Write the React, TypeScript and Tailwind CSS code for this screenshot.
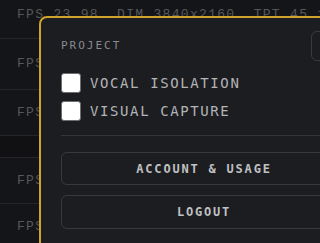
import React from "react";

const rows = [
  { h: "h-[39px]", text: true, pb: "pb-[9px]" },
  { h: "h-[51px]", text: true },
  { h: "h-[46px]", text: true },
  { h: "h-[22px]", text: false },
  { h: "h-[46px]", text: true },
  { h: "h-[46px]", text: true },
];

function Row({ h, text, pb }: { h: string; text: boolean; pb?: string }) {
  return (
    <div
      className={`${h} ${pb ?? ""} flex items-center border-b border-[#2a2b2e] pl-[17px] ${
        text ? "bg-[#17181b]" : "bg-[#131416]"
      }`}
    >
      {text && (
        <span className="whitespace-pre font-['Liberation_Mono',monospace] text-[13px] tracking-[1.3px] text-[#606164]">
          FPS 23.98  DIM 3840x2160  TPT 45.1
        </span>
      )}
    </div>
  );
}

function Check({ label }: { label: string }) {
  return (
    <label className="flex h-[20px] items-center gap-[9px]">
      <span className="h-[20px] w-[20px] shrink-0 rounded-[3px] border border-[#6e6e70] bg-white" />
      <span className="font-['DejaVu_Sans_Mono',monospace] text-[14px] tracking-[1.6px] text-[#b3b4b6]">
        {label}
      </span>
    </label>
  );
}

export default function App() {
  return (
    <div className="relative h-[243px] w-[320px] overflow-hidden bg-[#17181b]">
      <div className="flex flex-col">
        {rows.map((r, i) => (
          <Row key={i} {...r} />
        ))}
      </div>
      <div className="absolute inset-0 bg-black/10 backdrop-blur-[0.6px]" />
      <div className="absolute left-[39px] top-[16px] w-[330px] rounded-[8px] border-2 border-[#cfa32c] bg-[#1c1d21] px-[20px] pb-[20px] pt-[13px]">
        <div className="flex items-center justify-between">
          <span className="font-['DejaVu_Sans_Mono',monospace] text-[11px] tracking-[2px] text-[#8a8b8e]">
            PROJECT
          </span>
          <button className="h-[30px] w-[36px] rounded-[6px] border border-[#3a3b3f]" />
        </div>
        <div className="mt-[12px] flex flex-col gap-[8px]">
          <Check label="VOCAL ISOLATION" />
          <Check label="VISUAL CAPTURE" />
        </div>
        <div className="mt-[14px] h-px bg-[#333438]" />
        <div className="mt-[16px] flex flex-col gap-[10px]">
          <button className="h-[33px] rounded-[6px] border border-[#38393d] font-['DejaVu_Sans_Mono',monospace] text-[12px] font-bold tracking-[1.8px] text-[#c0c1c3]">
            ACCOUNT &amp; USAGE
          </button>
          <button className="h-[34px] rounded-[6px] border border-[#38393d] font-['DejaVu_Sans_Mono',monospace] text-[12px] font-bold tracking-[1.8px] text-[#c0c1c3]">
            LOGOUT
          </button>
        </div>
      </div>
    </div>
  );
}
